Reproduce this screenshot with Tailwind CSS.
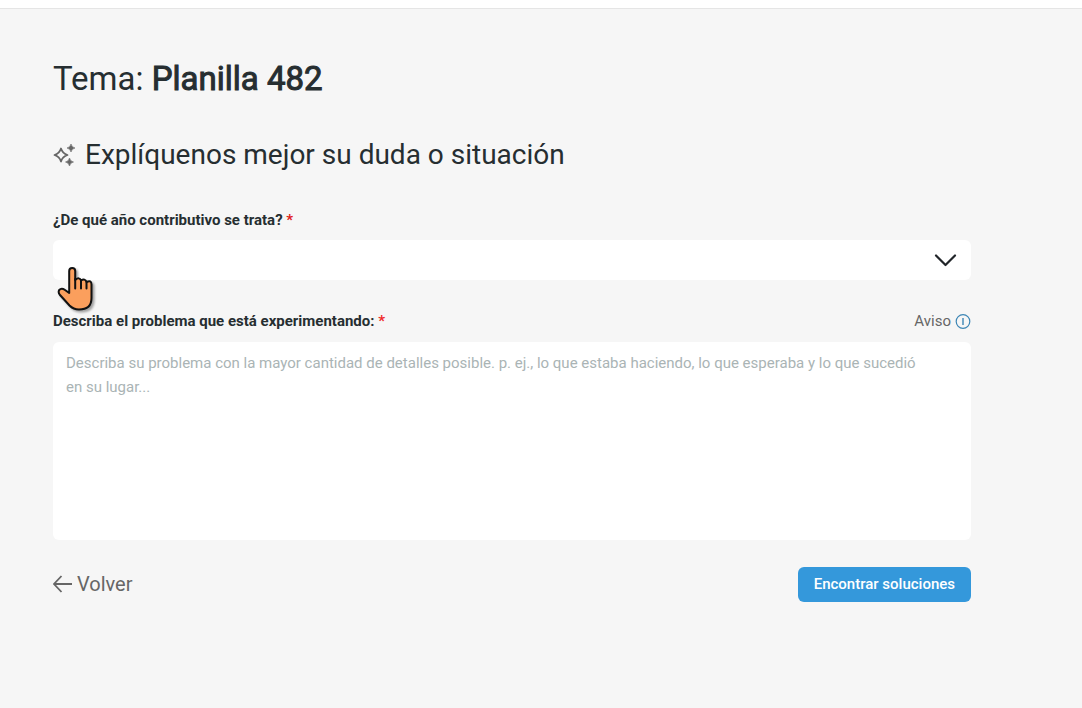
<!DOCTYPE html>
<html lang="es">
<head>
<meta charset="utf-8">
<meta name="viewport" content="width=device-width, initial-scale=1">
<title>Planilla 482</title>
<script src="https://cdn.jsdelivr.net/npm/@tailwindcss/browser@4"></script>
</head>
<body class="min-h-screen bg-[#f6f6f6] font-['Roboto',sans-serif] text-[#262e31]">
<header class="h-[9px] border-b border-[#e5e5e5] bg-white"></header>
<main class="mr-[111px] ml-[53px] pt-[46px]">
  <h1 class="text-[33px] leading-12">Tema: <strong class="font-normal [-webkit-text-stroke:1px_#262e31]">Planilla 482</strong></h1>
  <h2 class="mt-7 flex items-center gap-2 text-[28px] leading-12">
    <svg class="size-6 shrink-0" viewBox="0 0 24 24" aria-hidden="true">
      <path d="M8 5.500Q9.500 10.500 14.500 12Q9.500 13.500 8 18.500Q6.500 13.500 1.500 12Q6.500 10.500 8 5.500Z" fill="none" stroke="#666" stroke-width="1.800" stroke-linejoin="round"/>
      <path d="M18 1Q18.700 4.300 22 5Q18.700 5.700 18 9Q17.300 5.700 14 5Q17.300 4.300 18 1ZM16.500 15Q17.200 18.300 20.500 19Q17.200 19.700 16.500 23Q15.800 19.700 12.500 19Q15.800 18.300 16.500 15Z" fill="#666" stroke="#666" stroke-width=".6"/>
    </svg>
    Explíquenos mejor su duda o situación
  </h2>
  <form>
    <label for="year" class="mt-[29px] block text-[15px] leading-6 font-bold">¿De qué año contributivo se trata? <span class="text-[#e01b1b]">*</span></label>
    <div class="relative mt-2">
      <select id="year" class="block h-10 w-full cursor-pointer appearance-none rounded-md bg-white px-3"><option></option></select>
      <svg class="pointer-events-none absolute top-3 right-3.5 h-4 w-6" viewBox="0 0 24 16" fill="none" stroke="#212529" stroke-width="2.200" stroke-linecap="round" stroke-linejoin="round" aria-hidden="true"><path d="M3 3.500L12.500 13L22 3.500"/></svg>
      <!-- Hand pointer over the list -->
      <svg class="pointer-events-none absolute top-6 left-1 h-12 w-10 drop-shadow-[2px_2px_1px_rgba(0,0,0,0.35)]" viewBox="0 0 40 48" aria-hidden="true">
        <path d="M12.200 29V7Q12.200 4 15.200 4Q18.200 4 18.200 7V16Q22.500 12.500 24 16.500Q28 14 29.500 18Q34.500 15.500 34.500 20.500V34Q34.500 45.500 22 45.500Q16.500 45.500 12.500 41.500L3 31Q.8 28.500 2.200 26Q4.500 23.500 8 26Z" fill="#fb9f5d" stroke="#111" stroke-width="2" stroke-linejoin="round"/>
        <path d="M18.200 15V24.500M24 16.500V24.500M29.500 18V24.500" stroke="#111" stroke-width="2" stroke-linecap="round"/>
      </svg>
    </div>
    <div class="mt-[29px] flex items-center justify-between text-[15px] leading-6">
      <label for="problem" class="font-bold">Describa el problema que está experimentando: <span class="text-[#f02b2b]">*</span></label>
      <button type="button" class="flex cursor-pointer items-center gap-1 text-[#666]">Aviso
        <svg class="size-4" viewBox="0 0 16 16" fill="none" stroke="#3d86b5" aria-hidden="true"><circle cx="8" cy="8.500" r="6.800" stroke-width="1.200"/><path d="M8 5V12" stroke-width="1.400"/></svg>
      </button>
    </div>
    <textarea id="problem" class="mt-[9px] block h-[198px] w-full resize-none rounded-md bg-white py-[9px] pr-10 pl-[13px] text-[15px] leading-6 placeholder:text-[#aab4b5]" placeholder="Describa su problema con la mayor cantidad de detalles posible. p. ej., lo que estaba haciendo, lo que esperaba y lo que sucedió en su lugar..."></textarea>
    <div class="mt-[27px] flex items-start justify-between">
      <a href="#" class="flex h-[33px] items-center gap-1 text-xl text-[#666]">
        <svg class="size-5" viewBox="0 0 20 20" fill="none" stroke="#666" stroke-width="1.800" aria-hidden="true"><path d="M19 10H1M8.500 2L1 10L8.500 18"/></svg>Volver</a>
      <button type="submit" class="h-[35px] cursor-pointer rounded-md bg-[#3498db] px-4 text-[15px] font-medium text-white">Encontrar soluciones</button>
    </div>
  </form>
</main>
</body>
</html>
